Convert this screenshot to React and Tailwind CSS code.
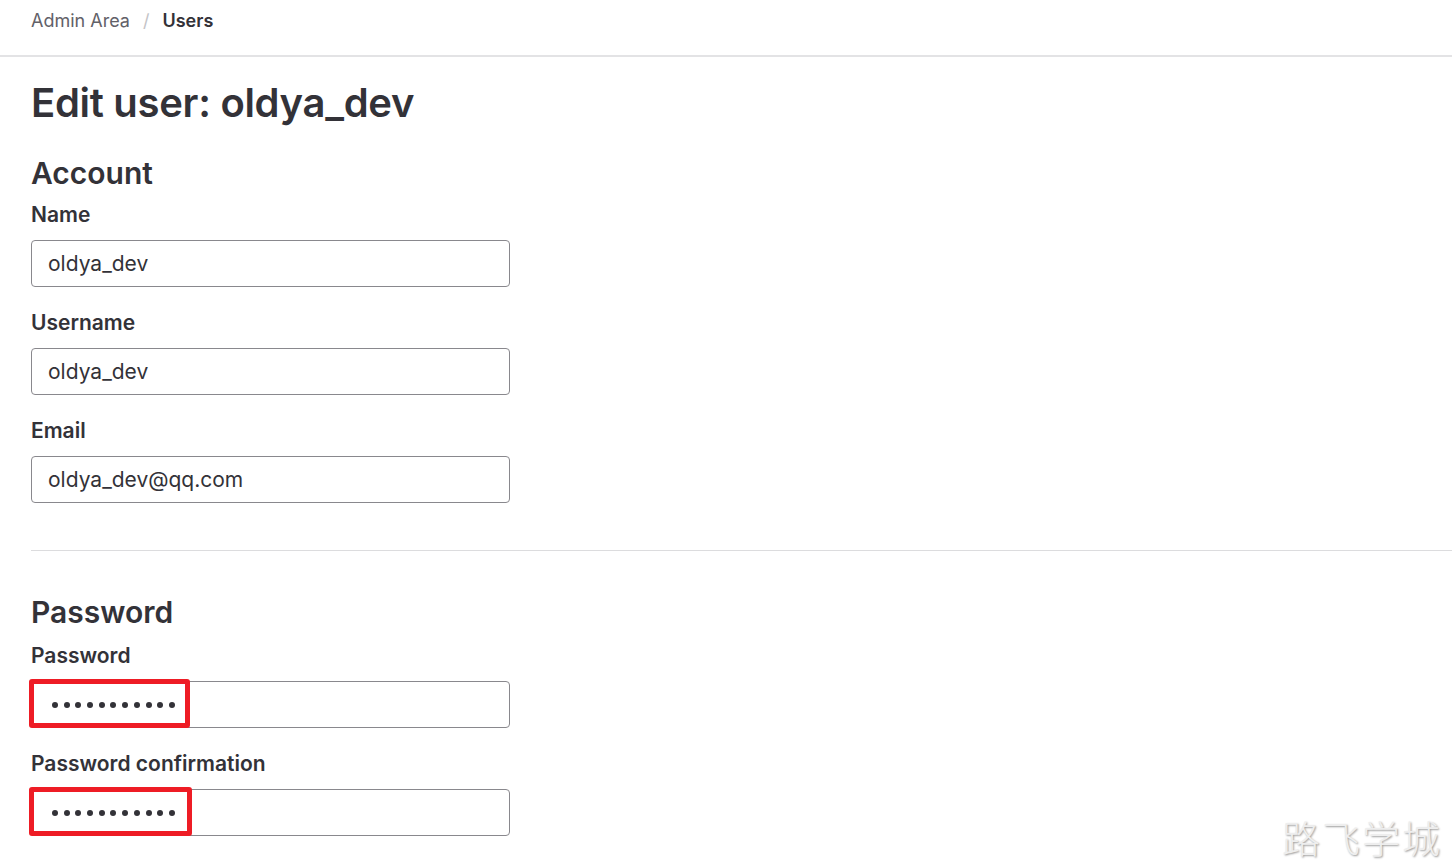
import React from 'react';

const font = { fontFamily: 'Inter, "Noto Sans CJK SC", sans-serif' };

const Field = ({ label, value }) => (
  <div className="flex flex-col">
    <label className="text-[21px] leading-[28px] font-semibold text-[#333238]">{label}</label>
    <input
      type="text"
      readOnly
      value={value}
      className="mt-[11px] w-[479px] h-[47px] rounded-[4px] border border-[#89888d] bg-white px-[16px] text-[21px] text-[#333238] outline-none"
      style={font}
    />
  </div>
);

// masked password box with the red highlight drawn over it
const PasswordField = ({ label, maskWidth }) => (
  <div className="flex flex-col">
    <label className="text-[21px] leading-[28px] font-semibold text-[#333238]">{label}</label>
    <div className="relative mt-[11px] w-[479px]">
      <div className="flex h-[47px] items-center gap-[5.7px] rounded-[4px] border border-[#89888d] bg-white pl-[20px]">
        {Array.from({ length: 11 }).map((_, i) => (
          <span key={i} className="h-[6px] w-[6px] rounded-full bg-[#333238]" />
        ))}
      </div>
      <div
        className="absolute left-[-2px] top-[-2px] h-[49px] rounded-[3px] border-[5px] border-[#ee1c25]"
        style={{ width: maskWidth }}
      />
    </div>
  </div>
);

export default function App() {
  return (
    <div className="relative min-h-[866px] bg-white text-[#333238]" style={font}>
      {/* top bar */}
      <div className="h-[57px] border-b-2 border-[#e3e3e5] px-[31px] pt-[9px]">
        <nav className="flex items-center gap-[13px] text-[18px] leading-[24px]">
          <span className="text-[#626168]">Admin Area</span>
          <span className="text-[#c4c4c7]">/</span>
          <span className="font-semibold text-[#333238]">Users</span>
        </nav>
      </div>

      <div className="px-[31px]">
        <h1 className="mt-[21px] text-[40px] leading-[50px] font-semibold tracking-[-0.3px]">Edit user: oldya_dev</h1>

        <h2 className="mt-[27px] text-[30px] leading-[36px] font-semibold">Account</h2>
        <div className="mt-[10px] flex flex-col gap-[22px]">
          <Field label="Name" value="oldya_dev" />
          <Field label="Username" value="oldya_dev" />
          <Field label="Email" value="oldya_dev@qq.com" />
        </div>
      </div>

      <div className="ml-[31px] mt-[47px] border-t border-[#dcdcde]" />

      <div className="px-[31px]">
        <h2 className="mt-[43px] text-[30px] leading-[36px] font-semibold">Password</h2>
        <div className="mt-[12px] flex flex-col gap-[22px]">
          <PasswordField label="Password" maskWidth={161} />
          <PasswordField label="Password confirmation" maskWidth={163} />
        </div>
      </div>

      {/* watermark */}
      <div
        className="absolute right-[10px] top-[811px] text-[38px] leading-[52px] font-light text-[#eeeeee] tracking-[2px]"
        style={{ fontFamily: '"Noto Sans CJK SC", sans-serif', textShadow: '1px 1px 2px #9a9a9a' }}
      >
        路飞学城
      </div>
    </div>
  );
}
